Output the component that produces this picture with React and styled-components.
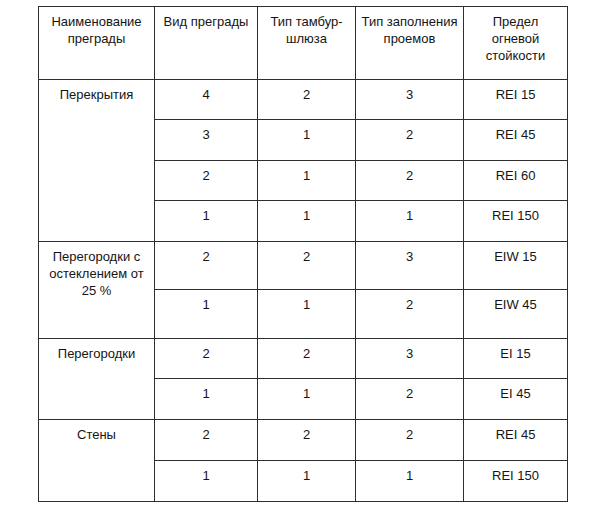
import React from "react";
import styled, {createGlobalStyle} from "styled-components";

const GlobalStyle = createGlobalStyle`
  html, body {
    margin: 0;
    padding: 0;
    background: #ffffff;
  }
  body {
    font-family: "Liberation Sans", Arial, sans-serif;
    color: #151515;
  }
`

const Page = styled.div`
  width: 600px;
  height: 508px;
  padding: 6px 0 0 38px;
  box-sizing: border-box;
  background: #fff;
`

const Table = styled.table`
  border-collapse: collapse;
  table-layout: fixed;
  width: 529px;
  font-size: 13px;
  line-height: 17px;
`

const Row = styled.tr`
  height: ${props => props.h}px;
`

const Cell = styled.td`
  border: 1px solid #2e2e2e;
  border-left-color: ${props => props.soft ? "#8c8c8c" : "#2e2e2e"};
  padding: 6px 3px 0;
  text-align: center;
  vertical-align: top;
  box-sizing: border-box;
`

const Head = styled(Cell).attrs({as: "th"})`
  font-weight: normal;
  white-space: nowrap;
`

const columns = [116, 103, 98, 108, 104]

const groups = [
  {
    name: "Перекрытия",
    rows: [
      {h: 40, v: ["4", "2", "3", "REI 15"]},
      {h: 41, v: ["3", "1", "2", "REI 45"]},
      {h: 40, v: ["2", "1", "2", "REI 60"]},
      {h: 41, v: ["1", "1", "1", "REI 150"]},
    ],
  },
  {
    name: "Перегородки с остеклением от 25 %",
    rows: [
      {h: 48, v: ["2", "2", "3", "EIW 15"]},
      {h: 49, v: ["1", "1", "2", "EIW 45"]},
    ],
  },
  {
    name: "Перегородки",
    rows: [
      {h: 40, v: ["2", "2", "3", "EI 15"]},
      {h: 41, v: ["1", "1", "2", "EI 45"]},
    ],
  },
  {
    name: "Стены",
    rows: [
      {h: 41, v: ["2", "2", "2", "REI 45"]},
      {h: 41, v: ["1", "1", "1", "REI 150"]},
    ],
  },
]

export default function App() {
  return (
    <Page>
      <GlobalStyle />
      <Table>
        <colgroup>
          {columns.map((w, i) => <col key={i} style={{width: w}} />)}
        </colgroup>
        <thead>
          <Row h={73}>
            <Head>Наименование<br />преграды</Head>
            <Head>Вид преграды</Head>
            <Head soft>Тип тамбур-<br />шлюза</Head>
            <Head soft>Тип заполнения<br />проемов</Head>
            <Head>Предел<br />огневой<br />стойкости</Head>
          </Row>
        </thead>
        <tbody>
          {groups.map(g => g.rows.map((r, i) => (
            <Row h={r.h} key={g.name + i}>
              {i === 0 && <Cell rowSpan={g.rows.length}>{g.name}</Cell>}
              <Cell>{r.v[0]}</Cell>
              <Cell soft>{r.v[1]}</Cell>
              <Cell soft>{r.v[2]}</Cell>
              <Cell>{r.v[3]}</Cell>
            </Row>
          )))}
        </tbody>
      </Table>
    </Page>
  )
}
